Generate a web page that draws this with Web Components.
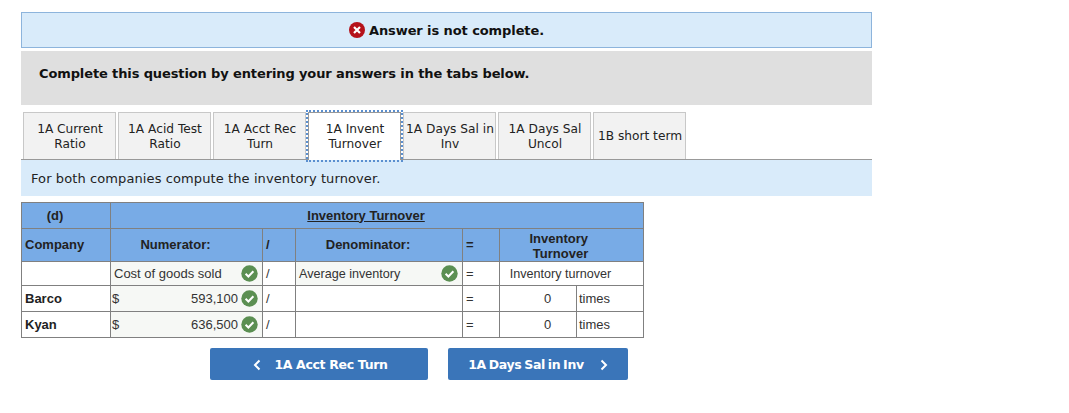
<!DOCTYPE html>
<html>
<head>
<meta charset="utf-8">
<title>Inventory Turnover</title>
<style>
  html, body { margin: 0; background: #fff; }
  body { padding: 12px 0 0 21px; width: 851px; font-family: "DejaVu Sans", Verdana, sans-serif; color: #111; }
</style>
</head>
<body>
<quiz-alert>Answer is not complete.</quiz-alert>
<quiz-instruction>Complete this question by entering your answers in the tabs below.</quiz-instruction>
<quiz-tabs>
  <quiz-tab>1A Current<br>Ratio</quiz-tab>
  <quiz-tab>1A Acid Test<br>Ratio</quiz-tab>
  <quiz-tab>1A Acct Rec<br>Turn</quiz-tab>
  <quiz-tab active>1A Invent<br>Turnover</quiz-tab>
  <quiz-tab>1A Days Sal in<br>Inv</quiz-tab>
  <quiz-tab>1A Days Sal<br>Uncol</quiz-tab>
  <quiz-tab>1B short term</quiz-tab>
</quiz-tabs>
<quiz-prompt>For both companies compute the inventory turnover.</quiz-prompt>
<turnover-table></turnover-table>
<quiz-nav>
  <nav-button dir="prev" style="width:218px">1A Acct Rec Turn</nav-button>
  <nav-button dir="next" style="width:180px;word-spacing:-1.2px">1A Days Sal in Inv</nav-button>
</quiz-nav>

<script>
const CHECK = `<svg class="check" width="17" height="17" viewBox="0 0 17 17"><circle cx="8.5" cy="8.5" r="8.2" fill="#5b8f52"/><path d="M4.6 8.8l2.8 2.7 5-5.2" fill="none" stroke="#fff" stroke-width="2"/></svg>`;

class QuizAlert extends HTMLElement {
  constructor() {
    super();
    this.attachShadow({ mode: 'open' });
    this.shadowRoot.innerHTML = `
      <style>
        :host {
          display: flex;
          align-items: center;
          justify-content: center;
          gap: 4px;
          box-sizing: border-box;
          height: 36px;
          background: #d9ebfa;
          border: 1px solid #8db4dc;
          font-size: 13px;
          font-weight: bold;
          letter-spacing: -0.09px;
        }
        svg { display: block; }
      </style>
      <svg width="16" height="16" viewBox="0 0 16 16">
        <circle cx="8" cy="8" r="8" fill="#b5121b"/>
        <path d="M5 5l6 6M11 5l-6 6" stroke="#fff" stroke-width="2.2"/>
      </svg>
      <slot></slot>`;
  }
}

class QuizInstruction extends HTMLElement {
  constructor() {
    super();
    this.attachShadow({ mode: 'open' });
    this.shadowRoot.innerHTML = `
      <style>
        :host {
          display: block;
          box-sizing: border-box;
          height: 54px;
          margin-top: 3px;
          padding: 14px 18px 0;
          background: #dfdfdf;
          font-size: 13px;
          line-height: 17px;
          font-weight: bold;
          letter-spacing: -0.12px;
        }
      </style>
      <slot></slot>`;
  }
}

class QuizTabs extends HTMLElement {
  constructor() {
    super();
    this.attachShadow({ mode: 'open' });
    this.shadowRoot.innerHTML = `
      <style>
        :host {
          display: flex;
          gap: 2px;
          box-sizing: border-box;
          height: 48px;
          margin-top: 7px;
          padding-left: 2px;
          border-bottom: 1px solid #999;
        }
      </style>
      <slot></slot>`;
  }
}

class QuizTab extends HTMLElement {
  constructor() {
    super();
    this.attachShadow({ mode: 'open' });
    this.shadowRoot.innerHTML = `
      <style>
        :host {
          display: flex;
          align-items: center;
          justify-content: center;
          box-sizing: border-box;
          width: 93px;
          height: 47px;
          padding: 1px 0 0 1px;
          background: #f2f2f2;
          border: 1px solid #c8c8c8;
          border-bottom: none;
          font-size: 12.2px;
          line-height: 15px;
          text-align: center;
          white-space: nowrap;
          color: #222;
        }
        :host([active]) {
          position: relative;
          padding-top: 0;
          background: #fff;
          border-color: #999;
          outline: 2px dotted #5b8fcf;
          outline-offset: 0;
          height: 48px;
        }
      </style>
      <slot></slot>`;
  }
}

class QuizPrompt extends HTMLElement {
  constructor() {
    super();
    this.attachShadow({ mode: 'open' });
    this.shadowRoot.innerHTML = `
      <style>
        :host {
          display: block;
          box-sizing: border-box;
          height: 36px;
          padding: 11px 10px 0;
          background: #d9ebfa;
          font-size: 13px;
          line-height: 16px;
          letter-spacing: 0.1px;
          color: #222;
        }
      </style>
      <slot></slot>`;
  }
}

class TurnoverTable extends HTMLElement {
  constructor() {
    super();
    this.attachShadow({ mode: 'open' });
    const row = (name, val) => `
      <tr class="r">
        <td class="name">${name}</td>
        <td class="inp amt-cell"><div class="amt"><span>$</span><span class="v">${val}</span>${CHECK}</div></td>
        <td class="op">/</td>
        <td class="blank"></td>
        <td class="op">=</td>
        <td class="zero">0</td>
        <td class="unit">times</td>
      </tr>`;
    this.shadowRoot.innerHTML = `
      <style>
        :host {
          display: block;
          margin-top: 6px;
          width: 622px;
          font-family: "Liberation Sans", Arial, sans-serif;
          font-size: 13px;
          color: #333;
        }
        table { border-collapse: collapse; table-layout: fixed; width: 622px; }
        td, th { border: 1px solid #808080; padding: 0 3px; }
        th { background: #78abe6; font-size: 13px; color: #222; line-height: 16px; }
        th.off { padding-right: 25px; }
        th.two { padding-top: 1px; line-height: 15px; }
        .h1 { height: 26px; }
        .h2 { height: 33px; }
        .r { height: 26px; }
        .r0 { height: 24px; }
        .left { text-align: left; }
        .inp { background: #f6f8f5; }
        .label { display: flex; justify-content: space-between; align-items: center; }
        .narrow { font-size: 12.6px; }
        .amt-cell { padding-left: 1px; }
        .amt { display: flex; align-items: center; }
        .amt .v { flex: 1; text-align: right; padding-right: 3px; }
        .check { display: block; flex: none; margin-right: 1px; }
        .name { font-weight: bold; color: #222; }
        .zero { text-align: center; padding-left: 22px; }
        .unit { padding-left: 2px; }
        .out { text-align: center; padding-right: 25px; }
      </style>
      <table>
        <colgroup>
          <col style="width:89px"><col style="width:152px"><col style="width:33px">
          <col style="width:167px"><col style="width:37px"><col style="width:77px"><col style="width:67px">
        </colgroup>
        <tr class="h1"><th class="off">(d)</th><th class="off" colspan="6"><u>Inventory Turnover</u></th></tr>
        <tr class="h2">
          <th class="left">Company</th>
          <th class="off">Numerator:</th>
          <th class="left">/</th>
          <th class="off">Denominator:</th>
          <th class="left">=</th>
          <th class="off two" colspan="2">Inventory&nbsp;<br>Turnover</th>
        </tr>
        <tr class="r0">
          <td></td>
          <td class="inp"><div class="label"><span>Cost of goods sold</span>${CHECK}</div></td>
          <td class="op">/</td>
          <td class="inp"><div class="label"><span class="narrow">Average inventory</span>${CHECK}</div></td>
          <td class="op">=</td>
          <td class="out narrow" colspan="2">Inventory turnover</td>
        </tr>
        ${row('Barco', '593,100')}
        ${row('Kyan', '636,500')}
      </table>`;
  }
}

class QuizNav extends HTMLElement {
  constructor() {
    super();
    this.attachShadow({ mode: 'open' });
    this.shadowRoot.innerHTML = `
      <style>
        :host {
          display: flex;
          gap: 20px;
          margin-top: 10px;
          padding-left: 189px;
        }
      </style>
      <slot></slot>`;
  }
}

class NavButton extends HTMLElement {
  constructor() {
    super();
    this.attachShadow({ mode: 'open' });
    const prev = this.getAttribute('dir') === 'prev';
    const arrow = `<svg width="8" height="12" viewBox="0 0 8 12"><path d="${prev ? 'M6.5 1.5L2 6l4.5 4.5' : 'M1.5 1.5L6 6l-4.5 4.5'}" fill="none" stroke="#fff" stroke-width="2"/></svg>`;
    this.shadowRoot.innerHTML = `
      <style>
        :host {
          display: flex;
          align-items: center;
          justify-content: center;
          gap: 14px;
          box-sizing: border-box;
          height: 32px;
          padding-top: 1px;
          background: #3a75b9;
          border-radius: 2px;
          color: #fff;
          font-size: 12.5px;
          letter-spacing: -0.33px;
          font-weight: bold;
        }
        :host([dir="prev"]) { gap: 13px; padding-left: 3px; }
        :host([dir="next"]) { gap: 16px; }
      </style>
      ${prev ? arrow : ''}<slot></slot>${prev ? '' : arrow}`;
  }
}

customElements.define('quiz-alert', QuizAlert);
customElements.define('quiz-instruction', QuizInstruction);
customElements.define('quiz-tabs', QuizTabs);
customElements.define('quiz-tab', QuizTab);
customElements.define('quiz-prompt', QuizPrompt);
customElements.define('turnover-table', TurnoverTable);
customElements.define('quiz-nav', QuizNav);
customElements.define('nav-button', NavButton);
</script>
</body>
</html>
